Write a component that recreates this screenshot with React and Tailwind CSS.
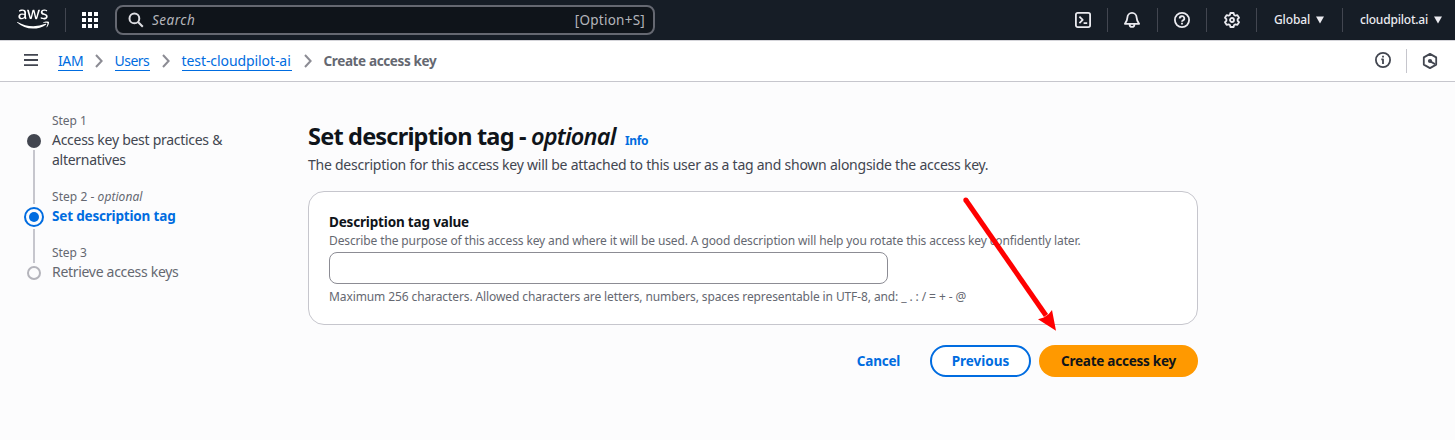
import React from "react";
import { FaAws } from "react-icons/fa";

function Divider({ className = "" }) {
  return <span className={"h-6 w-px shrink-0 bg-[#424650] " + className} />;
}

function Glyph({ children, className = "" }) {
  return (
    <svg viewBox="0 0 16 16" fill="none" stroke="currentColor" strokeWidth="1.8" strokeLinejoin="round" className={"size-4 shrink-0 " + className}>
      {children}
    </svg>
  );
}

function Caret() {
  return (
    <svg viewBox="0 0 8 8" className="size-2 shrink-0 fill-current">
      <path d="M0 0.6h8L4 7.4z" />
    </svg>
  );
}

function TopBar() {
  return (
    <header className="flex h-10 items-center bg-[#161d26] text-[#ebebf0]">
      <div className="flex w-[65px] shrink-0 justify-center">
        <FaAws className="mb-0.5 h-[26px] w-[32px] text-white" />
      </div>
      <Divider />
      <svg viewBox="0 0 16 16" className="ml-4 size-4 shrink-0 fill-white">
        {[0, 6, 12].map((y) => [0, 6, 12].map((x) => <rect key={x + "-" + y} x={x} y={y} width="4" height="4" />))}
      </svg>
      <div className="ml-[17px] flex h-[30px] w-[540px] shrink-0 items-center rounded-lg border-2 border-[#656871] bg-[#0f141a] pr-2 pl-[11px]">
        <svg viewBox="0 0 16 16" fill="none" stroke="currentColor" strokeWidth="2" className="size-4 text-[#dedee3]">
          <circle cx="6.4" cy="6.4" r="4.9" />
          <path d="M10 10l4.8 4.8" />
        </svg>
        <span className="ml-2 text-[13.5px] tracking-[0.5px] text-[#b4b4bb] italic">Search</span>
        <span className="ml-auto text-[13.5px] tracking-[0.25px] text-[#b4b4bb]">[Option+S]</span>
      </div>
      <div className="ml-auto flex items-center">
        <Glyph>
          <rect x="0.9" y="0.9" width="14.2" height="14.2" rx="1.8" />
          <path d="M4.4 4.6L7.7 7.9L4.4 11.2M8.6 11.2h3.6" />
        </Glyph>
        <Divider className="ml-4" />
        <Glyph className="ml-4">
          <path d="M3.4 5.6a4.6 4.7 0 0 1 9.2 0c0 2.9 1 4.2 2.5 6.2H.9c1.5-2 2.5-3.3 2.500-6.200zM5.600 12.400a2.400 2.500 0 0 0 4.800 0" />
        </Glyph>
        <Divider className="ml-[17px]" />
        <Glyph className="ml-4">
          <circle cx="8" cy="8" r="7.1" />
          <path d="M5.700 6.400a2.300 2.200 0 1 1 3.300 2c-.7.4-1 .7-1 1.400" />
          <path d="M8 10.800v1.600" />
        </Glyph>
        <Divider className="ml-4" />
        <Glyph className="ml-[17px]">
          <path d="M6.400 1h3.200l.5 2 1.300.7 2-.6 1.600 2.700L13.600 7.200v1.600l1.400 1.400-1.600 2.700-2-.6-1.300.7-.5 2H6.400l-.5-2-1.300-.7-2 .6L1 10.200l1.400-1.400V7.200L1 5.800l1.600-2.700 2 .6L5.900 3z" />
          <circle cx="8" cy="8" r="2" />
        </Glyph>
        <Divider className="ml-4" />
        <div className="flex w-[85px] items-center pl-[17px]">
          <span className="w-[42px] text-[12px] leading-4 font-medium whitespace-nowrap tracking-[-0.1px]">Global</span>
          <Caret />
        </div>
        <Divider />
        <div className="flex w-[112px] items-center pl-[17px]">
          <span className="w-[74px] text-[12px] leading-4 font-medium whitespace-nowrap tracking-[-0.2px]">cloudpilot.ai</span>
          <Caret />
        </div>
      </div>
    </header>
  );
}

function Chevron() {
  return (
    <svg viewBox="0 0 8 14" fill="none" stroke="#8c8c94" strokeWidth="2" className="h-3.5 w-2 shrink-0">
      <path d="M1 1l5.600 6L1 13" />
    </svg>
  );
}

function Crumb({ children, className }) {
  return (
    <a className={"flex h-5 items-center border-b border-[#006ce0] text-[14px] whitespace-nowrap text-[#006ce0] " + className}>
      {children}
    </a>
  );
}

function BreadcrumbBar() {
  return (
    <nav className="flex h-[42px] items-center border-t border-b border-t-[#d5d5da] border-b-[#c6c6cd] bg-white">
      <svg viewBox="0 0 14 12" className="mb-0.5 ml-6 h-3 w-3.5 shrink-0 fill-[#424650]">
        <path d="M0 0h14v1.800H0zM0 5.100h14v1.800H0zM0 10.200h14V12H0z" />
      </svg>
      <div className="ml-5 flex items-center">
        <Crumb className="w-[24.5px] tracking-[-0.4px]">IAM</Crumb>
        <span className="flex w-8 justify-center"><Chevron /></span>
        <Crumb className="w-[35px] tracking-[-0.5px]">Users</Crumb>
        <span className="flex w-8 justify-center"><Chevron /></span>
        <Crumb className="w-[110px] tracking-[-0.08px]">test-cloudpilot-ai</Crumb>
        <span className="flex w-8 justify-center"><Chevron /></span>
        <span className="text-[13.5px] font-bold whitespace-nowrap tracking-[-0.37px] text-[#656871]">Create access key</span>
      </div>
      <div className="ml-auto flex items-center text-[#424650]">
        <Glyph className="mb-0.5">
          <circle cx="8" cy="8" r="7.1" />
          <path d="M6.300 7.400H8V12M8 3.800v1.800" strokeWidth="1.8" />
        </Glyph>
        <span className="ml-[15px] h-6 w-px bg-[#c6c6cd]" />
        <Glyph className="mr-[17px] ml-[15px]">
          <path d="M8 .9l6.200 3.500v7.200L8 15.100l-6.200-3.500V4.400z" />
          <circle cx="8" cy="8" r="2.1" className="fill-current" stroke="none" />
          <path d="M8.400 8.400l4.800 2.800" />
        </Glyph>
      </div>
    </nav>
  );
}

function Steps() {
  return (
    <ol className="flex w-[284px] shrink-0 flex-col pt-[29px] pl-6">
      <li className="flex h-[76px]">
        <div className="flex w-5 flex-col items-center pt-[23px]">
          <span className="size-3.5 shrink-0 rounded-full bg-[#424650]" />
          <span className="mt-[2px] w-[2px] flex-1 bg-[#c6c6cd]" />
        </div>
        <div className="ml-2">
          <p className="text-[12px] leading-5 tracking-[-0.05px] text-[#656871]">Step 1</p>
          <p className="-mt-px text-[14px] leading-5 whitespace-nowrap tracking-[-0.28px] text-[#424650]">Access key best practices &amp;<br />alternatives</p>
        </div>
      </li>
      <li className="flex h-14">
        <div className="flex w-5 flex-col items-center">
          <span className="h-[17px] w-[2px] bg-[#c6c6cd]" />
          <span className="mt-[3px] flex size-5 shrink-0 items-center justify-center rounded-full border-2 border-[#006ce0]">
            <span className="size-2.5 rounded-full bg-[#006ce0]" />
          </span>
          <span className="mt-[2px] w-[2px] flex-1 bg-[#c6c6cd]" />
        </div>
        <div className="ml-2">
          <p className="text-[12px] leading-5 tracking-[0.05px] text-[#656871]">Step 2 - <i className="tracking-[0.05px]">optional</i></p>
          <p className="-mt-px text-[13.5px] leading-5 font-bold whitespace-nowrap tracking-[-0.18px] text-[#006ce0]">Set description tag</p>
        </div>
      </li>
      <li className="flex">
        <div className="flex w-5 flex-col items-center">
          <span className="h-5 w-[2px] bg-[#c6c6cd]" />
          <span className="mt-[3px] size-3.5 shrink-0 rounded-full border-2 border-[#b4b4bb]" />
        </div>
        <div className="ml-2">
          <p className="text-[12px] leading-5 tracking-[-0.05px] text-[#656871]">Step 3</p>
          <p className="-mt-px text-[14px] leading-5 whitespace-nowrap tracking-[-0.3px] text-[#656871]">Retrieve access keys</p>
        </div>
      </li>
    </ol>
  );
}

function DescriptionForm() {
  return (
    <main className="ml-6 w-[890px] shrink-0 pt-[39px]">
      <div className="flex h-[30px] items-baseline whitespace-nowrap text-[#0f141a]">
        <h1 className="w-[317px] text-[23.5px] leading-[30px] font-bold tracking-[-0.8px]">
          Set description tag - <i className="font-semibold">optional</i>
        </h1>
        <a className="text-[12px] font-bold tracking-[-0.4px] text-[#006ce0]">Info</a>
      </div>
      <p className="mt-1 text-[14px] leading-5 whitespace-nowrap tracking-[-0.245px] text-[#424650]">
        The description for this access key will be attached to this user as a tag and shown alongside the access key.
      </p>
      <section className="mt-4 h-[134px] rounded-2xl border border-[#c6c6cd] bg-white px-5 pt-5">
        <label className="block text-[13.5px] leading-5 font-bold tracking-[-0.17px] text-[#0f141a]">Description tag value</label>
        <p className="mt-px text-[12px] leading-4 whitespace-nowrap tracking-[-0.125px] text-[#656871]">
          Describe the purpose of this access key and where it will be used. A good description will help you rotate this access key confidently later.
        </p>
        <input className="mt-[3px] block h-8 w-[559px] rounded-lg border border-[#8c8c94] bg-white px-3" />
        <p className="mt-[5px] text-[12px] leading-4 whitespace-nowrap tracking-[-0.104px] text-[#656871]">
          Maximum 256 characters. Allowed characters are letters, numbers, spaces representable in UTF-8, and: _ . : / = + - @
        </p>
      </section>
      <div className="mt-5 flex h-8 justify-end text-[13.5px] font-bold whitespace-nowrap">
        <button className="w-[83px] tracking-[-0.2px] text-[#006ce0]">Cancel</button>
        <button className="ml-[10px] w-[101px] rounded-full border-2 border-[#006ce0] bg-white tracking-[0px] text-[#006ce0]">Previous</button>
        <button className="ml-2 w-[159px] rounded-full bg-[#ff9900] tracking-[-0.25px] text-[#0f141a]">Create access key</button>
      </div>
    </main>
  );
}

export default function App() {
  return (
    <div className="relative flex h-[440px] w-[1455px] flex-col overflow-hidden bg-[#fcfcfd] font-['Noto_Sans',sans-serif]">
      <TopBar />
      <BreadcrumbBar />
      <div className="flex">
        <Steps />
        <DescriptionForm />
      </div>
      <svg viewBox="0 0 100 140" className="pointer-events-none absolute top-[195px] left-[960px] h-[140px] w-[100px]">
        <path d="M5.800 5L86 120.500" stroke="#ff0000" strokeWidth="5" />
        <circle cx="5.8" cy="5" r="2.5" fill="#ff0000" />
        <path d="M96 135.700L78 124.300L83.800 122.500L88.800 119L92 115z" fill="#ff0000" />
      </svg>
    </div>
  );
}
